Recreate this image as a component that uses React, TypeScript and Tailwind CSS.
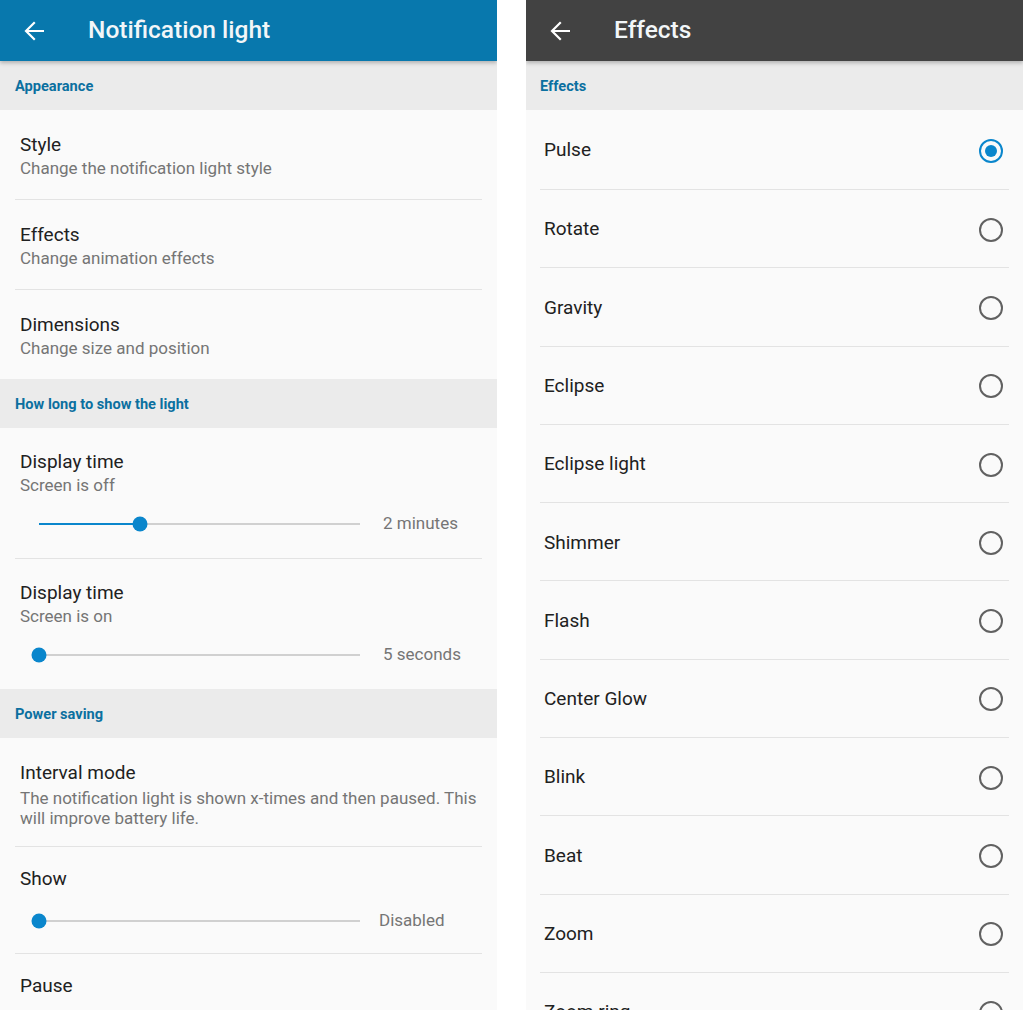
import React from "react";

const font = { fontFamily: "Roboto, 'Noto Sans', sans-serif" };

function BackArrow() {
  return (
    <svg width="20" height="20" viewBox="0 0 20 20" fill="none" stroke="white" strokeWidth="2.2" strokeLinecap="square">
      <path d="M19 10H2.5M10 2L2 10l8 8" />
    </svg>
  );
}

function AppBar({ title, dark }: { title: string; dark?: boolean }) {
  return (
    <div
      className={`relative z-10 flex h-[61px] shrink-0 items-center shadow-[0_2px_4px_rgba(0,0,0,0.25)] ${
        dark ? "bg-[#424242]" : "bg-[#0878ad]"
      }`}
    >
      <div className="flex w-[88px] justify-start pl-[24px]">
        <BackArrow />
      </div>
      <span className="text-[24.5px] font-medium text-[#f2f6f8]">{title}</span>
    </div>
  );
}

function Section({ label }: { label: string }) {
  return (
    <div className="flex h-[49px] shrink-0 items-center bg-[#ebebeb] pl-[15px] pt-[3px] text-[14.6px] font-bold text-[#0b70a0]">
      {label}
    </div>
  );
}

function Divider() {
  return <div className="mx-[15px] h-px shrink-0 bg-[#e3e3e3]" />;
}

function Item({ title, sub }: { title: string; sub: string }) {
  return (
    <div className="flex h-[89px] shrink-0 flex-col justify-center pl-[20px] pr-[20px] pt-[3px]">
      <div className="text-[19px] leading-[24px] text-[#212121]">{title}</div>
      <div className="text-[17px] leading-[23px] text-[#757575]">{sub}</div>
    </div>
  );
}

function Slider({ pct, value, gap = "ml-[23px]" }: { pct: number; value: string; gap?: string }) {
  return (
    <div className="flex items-center">
      <div className="relative ml-[39px] h-[2px] w-[321px] bg-[#d0d0d0]">
        <div className="absolute left-0 top-0 h-[2px] bg-[#0a86cc]" style={{ width: `${pct}%` }} />
        <div
          className="absolute top-1/2 h-[15px] w-[15px] -translate-x-1/2 -translate-y-1/2 rounded-full bg-[#0a86cc]"
          style={{ left: `${pct}%` }}
        />
      </div>
      <span className={`${gap} text-[17px] text-[#757575]`}>{value}</span>
    </div>
  );
}

function SliderItem({ title, sub, pct, value }: { title: string; sub: string; pct: number; value: string }) {
  return (
    <div className="flex h-[130px] shrink-0 flex-col pt-[22px]">
      <div className="pl-[20px] text-[19px] leading-[24px] text-[#212121]">{title}</div>
      <div className="pl-[20px] text-[17px] leading-[23px] text-[#757575]">{sub}</div>
      <div className="mt-[14px]">
        <Slider pct={pct} value={value} />
      </div>
    </div>
  );
}

function LeftScreen() {
  return (
    <div className="flex h-[1010px] w-[497px] flex-col overflow-hidden bg-[#fafafa]">
      <AppBar title="Notification light" />
      <Section label="Appearance" />
      <Item title="Style" sub="Change the notification light style" />
      <Divider />
      <Item title="Effects" sub="Change animation effects" />
      <Divider />
      <Item title="Dimensions" sub="Change size and position" />
      <Section label="How long to show the light" />
      <SliderItem title="Display time" sub="Screen is off" pct={31.5} value="2 minutes" />
      <Divider />
      <SliderItem title="Display time" sub="Screen is on" pct={0} value="5 seconds" />
      <Section label="Power saving" />
      <div className="flex h-[108px] shrink-0 flex-col pl-[20px] pr-[12px] pt-[23px]">
        <div className="text-[19px] leading-[24px] text-[#212121]">Interval mode</div>
        <div className="mt-[3px] text-[17px] leading-[20px] text-[#757575]">
          The notification light is shown x-times and then paused. This will improve battery life.
        </div>
      </div>
      <Divider />
      <div className="h-[106px] shrink-0 pt-[20px]">
        <div className="pl-[20px] text-[19px] leading-[24px] text-[#212121]">Show</div>
        <div className="mt-[17px]">
          <Slider pct={0} value="Disabled" gap="ml-[19px]" />
        </div>
      </div>
      <Divider />
      <div className="pl-[20px] pt-[20px] text-[19px] leading-[24px] text-[#212121]">Pause</div>
    </div>
  );
}

const effects = [
  "Pulse",
  "Rotate",
  "Gravity",
  "Eclipse",
  "Eclipse light",
  "Shimmer",
  "Flash",
  "Center Glow",
  "Blink",
  "Beat",
  "Zoom",
  "Zoom ring",
];

function Radio({ checked }: { checked: boolean }) {
  return checked ? (
    <div className="flex h-[24px] w-[24px] items-center justify-center rounded-full border-[2.5px] border-[#0a86cc]">
      <div className="h-[12px] w-[12px] rounded-full bg-[#0a86cc]" />
    </div>
  ) : (
    <div className="h-[24px] w-[24px] rounded-full border-[2px] border-[#616161]" />
  );
}

function RightScreen() {
  return (
    <div className="flex h-[1010px] w-[497px] flex-col overflow-hidden bg-[#fafafa]">
      <AppBar title="Effects" dark />
      <div className="flex h-[49px] shrink-0 items-center bg-[#ebebeb] pl-[14px] pt-[3px] text-[14.6px] font-bold text-[#0b70a0]">
        Effects
      </div>
      {effects.map((e, i) => (
        <div key={e} className="shrink-0">
          {i > 0 && <div className="mx-[14px] h-px bg-[#e3e3e3]" />}
          <div
            className={`flex items-center justify-between pl-[18px] pr-[20px] pt-[2px] ${
              i === 0 ? "h-[79px]" : "h-[77.3px]"
            }`}
          >
            <span className="text-[19px] text-[#212121]">{e}</span>
            <Radio checked={i === 0} />
          </div>
        </div>
      ))}
    </div>
  );
}

export default function App() {
  return (
    <div className="flex h-[1010px] w-[1023px] justify-between bg-white" style={font}>
      <LeftScreen />
      <RightScreen />
    </div>
  );
}
